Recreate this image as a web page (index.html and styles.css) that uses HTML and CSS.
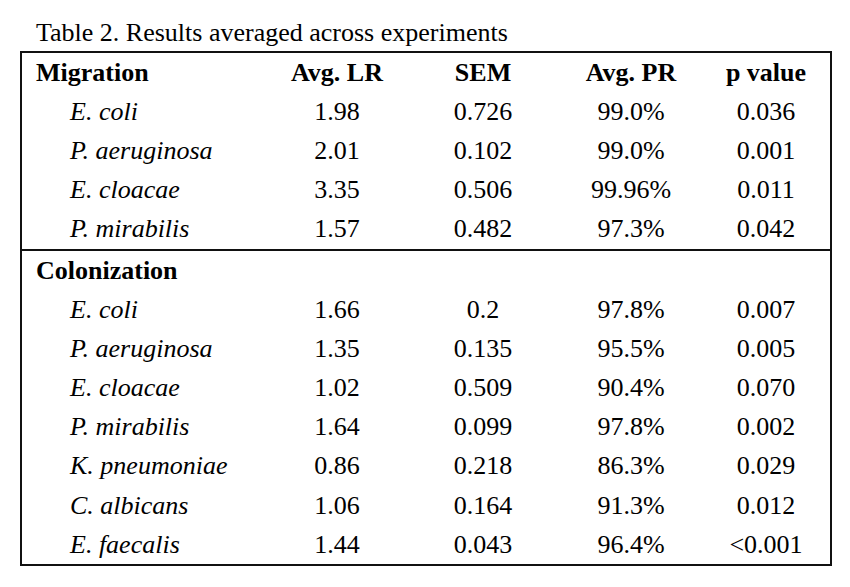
FILE: index.html
```html
<!DOCTYPE html>
<html>
<head>
<meta charset="utf-8">
<link rel="stylesheet" href="styles.css">
</head>
<body>
<div class="page">
  <p class="caption">Table 2. Results averaged across experiments</p>
  <div class="table">
    <div class="section">
      <div class="row head">
        <span class="cell label">Migration</span>
        <span class="cell">Avg. LR</span>
        <span class="cell">SEM</span>
        <span class="cell">Avg. PR</span>
        <span class="cell">p value</span>
      </div>
      <div class="row"><span class="cell species">E. coli</span><span class="cell">1.98</span><span class="cell">0.726</span><span class="cell">99.0%</span><span class="cell">0.036</span></div>
      <div class="row"><span class="cell species">P. aeruginosa</span><span class="cell">2.01</span><span class="cell">0.102</span><span class="cell">99.0%</span><span class="cell">0.001</span></div>
      <div class="row"><span class="cell species">E. cloacae</span><span class="cell">3.35</span><span class="cell">0.506</span><span class="cell">99.96%</span><span class="cell">0.011</span></div>
      <div class="row"><span class="cell species">P. mirabilis</span><span class="cell">1.57</span><span class="cell">0.482</span><span class="cell">97.3%</span><span class="cell">0.042</span></div>
    </div>
    <div class="section">
      <div class="row head">
        <span class="cell label">Colonization</span>
        <span class="cell"></span>
        <span class="cell"></span>
        <span class="cell"></span>
        <span class="cell"></span>
      </div>
      <div class="row"><span class="cell species">E. coli</span><span class="cell">1.66</span><span class="cell">0.2</span><span class="cell">97.8%</span><span class="cell">0.007</span></div>
      <div class="row"><span class="cell species">P. aeruginosa</span><span class="cell">1.35</span><span class="cell">0.135</span><span class="cell">95.5%</span><span class="cell">0.005</span></div>
      <div class="row"><span class="cell species">E. cloacae</span><span class="cell">1.02</span><span class="cell">0.509</span><span class="cell">90.4%</span><span class="cell">0.070</span></div>
      <div class="row"><span class="cell species">P. mirabilis</span><span class="cell">1.64</span><span class="cell">0.099</span><span class="cell">97.8%</span><span class="cell">0.002</span></div>
      <div class="row"><span class="cell species">K. pneumoniae</span><span class="cell">0.86</span><span class="cell">0.218</span><span class="cell">86.3%</span><span class="cell">0.029</span></div>
      <div class="row"><span class="cell species">C. albicans</span><span class="cell">1.06</span><span class="cell">0.164</span><span class="cell">91.3%</span><span class="cell">0.012</span></div>
      <div class="row"><span class="cell species">E. faecalis</span><span class="cell">1.44</span><span class="cell">0.043</span><span class="cell">96.4%</span><span class="cell">&lt;0.001</span></div>
    </div>
  </div>
</div>
</body>
</html>
```

FILE: styles.css
```css
html, body {
  margin: 0;
  padding: 0;
  background: #ffffff;
}

body {
  font-family: "Liberation Serif", "Times New Roman", serif;
  font-size: 26px;
  color: #000000;
}

.page {
  padding: 18px 0 0 20px;
}

.caption {
  margin: 0 0 3px 16px;
  line-height: 30px;
  font-size: 26px;
}

.table {
  box-sizing: border-box;
  width: 812px;
  border: 2px solid #111111;
}

.section + .section {
  border-top: 2px solid #111111;
}

.row {
  display: grid;
  grid-template-columns: 242px 146px 146px 150px 120px;
  height: 39.2px;
  align-items: center;
  line-height: 30px;
}

.cell {
  text-align: center;
  white-space: nowrap;
}

.head .cell {
  font-weight: bold;
}

.cell.label {
  text-align: left;
  padding-left: 14px;
}

.cell.species {
  text-align: left;
  padding-left: 48px;
  font-style: italic;
}
```
